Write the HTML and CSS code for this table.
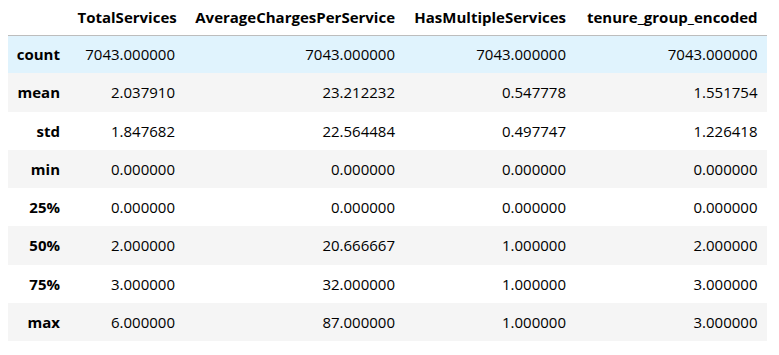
FILE: index.html
```html
<!DOCTYPE html>
<html lang="en">

<head>
  <meta charset="UTF-8" />
  <title>describe()</title>
  <link rel="stylesheet" href="styles.css">
</head>

<body>
  <div class="output-area">
    <table class="dataframe">
      <colgroup>
        <col class="col-index">
        <col class="col-total">
        <col class="col-avg">
        <col class="col-multi">
        <col class="col-tenure">
      </colgroup>
      <thead>
        <tr>
          <th></th>
          <th>TotalServices</th>
          <th>AverageChargesPerService</th>
          <th>HasMultipleServices</th>
          <th>tenure_group_encoded</th>
        </tr>
      </thead>
      <tbody>
        <tr class="hovered">
          <th>count</th>
          <td>7043.000000</td>
          <td>7043.000000</td>
          <td>7043.000000</td>
          <td>7043.000000</td>
        </tr>
        <tr>
          <th>mean</th>
          <td>2.037910</td>
          <td>23.212232</td>
          <td>0.547778</td>
          <td>1.551754</td>
        </tr>
        <tr>
          <th>std</th>
          <td>1.847682</td>
          <td>22.564484</td>
          <td>0.497747</td>
          <td>1.226418</td>
        </tr>
        <tr>
          <th>min</th>
          <td>0.000000</td>
          <td>0.000000</td>
          <td>0.000000</td>
          <td>0.000000</td>
        </tr>
        <tr>
          <th>25%</th>
          <td>0.000000</td>
          <td>0.000000</td>
          <td>0.000000</td>
          <td>0.000000</td>
        </tr>
        <tr>
          <th>50%</th>
          <td>2.000000</td>
          <td>20.666667</td>
          <td>1.000000</td>
          <td>2.000000</td>
        </tr>
        <tr>
          <th>75%</th>
          <td>3.000000</td>
          <td>32.000000</td>
          <td>1.000000</td>
          <td>3.000000</td>
        </tr>
        <tr>
          <th>max</th>
          <td>6.000000</td>
          <td>87.000000</td>
          <td>1.000000</td>
          <td>3.000000</td>
        </tr>
      </tbody>
    </table>
  </div>
</body>

</html>
```

FILE: styles.css
```css
/* notebook output styling */

body {
  background-color: #ffffff;
  color: #000000;
  font-family: 'Open Sans', 'Noto Sans', sans-serif;
  margin: 0;
  padding: 0 8px;
}

.dataframe {
  border-collapse: collapse;
  border-spacing: 0;
  table-layout: fixed;
  width: 759px;
  font-size: 15px;
  line-height: 20px;
}

.col-index {
  width: 61.5px;
}

.col-total {
  width: 115px;
}

.col-avg {
  width: 220px;
}

.col-multi {
  width: 171px;
}

.col-tenure {
  width: 191.5px;
}

.dataframe th,
.dataframe td {
  text-align: right;
  padding: 0 9.5px 0 8px;
  white-space: nowrap;
  vertical-align: middle;
}

.dataframe th {
  font-weight: 700;
}

.dataframe thead tr {
  height: 35px;
}

.dataframe thead th {
  border-bottom: 1px solid #bdbdbd;
  padding-bottom: 1px;
}

.dataframe tbody tr {
  height: 38.25px;
}

.dataframe tbody tr:nth-child(even) {
  background-color: #f5f5f5;
}

.dataframe tbody tr.hovered {
  background-color: #e0f3fd;
}
```
